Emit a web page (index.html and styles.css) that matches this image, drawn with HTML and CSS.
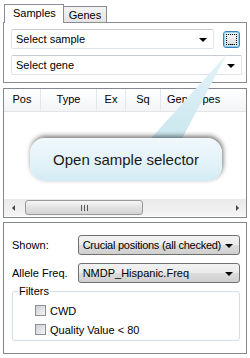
FILE: index.html
```html
<!DOCTYPE html>
<html lang="en">
<head>
<meta charset="UTF-8" />
<title>Samples</title>
<link rel="stylesheet" href="styles.css">
</head>
<body>

<div class="tabs">
  <div class="tab active">Samples</div>
  <div class="tab">Genes</div>
</div>

<div class="tab-panel">
  <div class="row">
    <div class="combo light wide">Select sample<span class="arrow"></span></div>
    <button class="dots"><span class="focus">...</span></button>
  </div>
  <div class="row">
    <div class="combo light full">Select gene<span class="arrow"></span></div>
  </div>
</div>

<div class="grid">
  <div class="grid-head">
    <div class="col c-pos">Pos</div>
    <div class="col c-type">Type</div>
    <div class="col c-ex">Ex</div>
    <div class="col c-sq">Sq</div>
    <div class="col c-gen">Genotypes</div>
  </div>
  <div class="grid-body"></div>
  <div class="hscroll">
    <span class="sarrow left"></span>
    <div class="track">
      <div class="thumb"><span class="grip"></span></div>
    </div>
    <span class="sarrow right"></span>
  </div>
</div>

<div class="options">
  <div class="opt-row">
    <label>Shown:</label>
    <div class="combo button"><span class="text tight">Crucial positions (all checked)</span><span class="arrow"></span></div>
  </div>
  <div class="opt-row">
    <label>Allele Freq.</label>
    <div class="combo button"><span class="text">NMDP_Hispanic.Freq</span><span class="arrow"></span></div>
  </div>
  <div class="filters">
    <span class="legend">Filters</span>
    <div class="check"><span class="box"></span>CWD</div>
    <div class="check"><span class="box"></span>Quality Value &lt; 80</div>
  </div>
</div>

<!-- callout over the grid -->
<svg class="tail" width="250" height="160" viewBox="0 0 250 160">
  <defs>
    <linearGradient id="tailFill" x1="0" y1="0" x2="0" y2="1">
      <stop offset="0" stop-color="#e4f3f8"/>
      <stop offset="1" stop-color="#c9e6ef"/>
    </linearGradient>
  </defs>
  <polygon points="227,54 144,146 178,146" fill="url(#tailFill)"/>
</svg>
<div class="callout">Open sample selector</div>

</body>
</html>
```

FILE: styles.css
```css
body {
  font-family: 'Liberation Sans', Arial, sans-serif;
  font-size: 11px;
  margin: 0;
  padding: 0;
  background: #fff;
  color: #000;
  width: 250px;
  height: 358px;
  position: relative;
  overflow: hidden;
}
.tabs {
  display: flex;
  align-items: flex-end;
  padding: 4px 0 0 4px;
  height: 18px;
  position: relative;
  z-index: 1;
}
.tab {
  border: 1px solid #898c95;
  border-bottom: none;
  padding: 0 5px;
  line-height: 16px;
  background: linear-gradient(#f3f3f3, #e4e4e4);
  box-sizing: border-box;
  height: 16px;
}
.tab.active {
  background: #fff;
  height: 19px;
  padding: 0 7px 0 8px;
  margin-right: -1px;
  line-height: 16px;
  position: relative;
  top: 1px;
}
.tab-panel {
  margin: 0 3px;
  border: 1px solid #898c95;
  height: 53px;
  padding: 6px 0 0 7px;
}
.tab-panel .row {
  display: flex;
  align-items: center;
  height: 20px;
  margin-bottom: 6px;
}
.combo {
  position: relative;
  box-sizing: border-box;
  height: 20px;
  line-height: 18px;
  padding-left: 4px;
  white-space: nowrap;
  overflow: hidden;
}
.combo .text {
  display: block;
  overflow: hidden;
}
.combo .tight { letter-spacing: -0.25px; }
.combo.light {
  border: 1px solid #dfe3ea;
  border-top-color: #c5cad3;
  border-radius: 2px;
  background: #fff;
}
.combo.wide { width: 203px; }
.combo.full { width: 231px; }
.arrow {
  position: absolute;
  right: 6px;
  top: 8px;
  border-left: 4px solid transparent;
  border-right: 4px solid transparent;
  border-top: 4px solid #000;
}
.dots {
  margin-left: 9px;
  width: 17px;
  height: 17px;
  padding: 2px;
  border: 1px solid #3c7fb1;
  border-radius: 3px;
  background: linear-gradient(#eef5fb, #c9dfef);
  box-shadow: 0 0 0 1px #8fd0f5 inset;
  font: 9px 'Liberation Sans', sans-serif;
}
.dots .focus {
  display: block;
  height: 11px;
  border: 1px dotted #000;
  line-height: 14px;
  background: linear-gradient(#f6f6f6, #dcdcdc);
  box-sizing: border-box;
}
.grid {
  margin: 5px 3px 0;
  border: 1px solid #828790;
  height: 128px;
  display: flex;
  flex-direction: column;
}
.grid-head {
  display: flex;
  height: 22px;
  background: linear-gradient(#fff, #f3f4f6);
  border-bottom: 1px solid #e5e5e5;
}
.col {
  border-right: 1px solid #e3e8ee;
  line-height: 21px;
  text-align: center;
  box-sizing: border-box;
}
.c-pos { width: 37px; }
.c-type { width: 56px; }
.c-ex { width: 29px; }
.c-sq { width: 35px; }
.c-gen { width: 70px; padding-left: 6px; text-align: left; border-right: none; }
.grid-body { flex: 1; }
.hscroll {
  display: flex;
  align-items: center;
  height: 17px;
  background: linear-gradient(#e9e9e9, #f5f5f5);
  margin-bottom: 1px;
}
.sarrow {
  width: 18px;
  display: flex;
  justify-content: center;
}
.sarrow.left::before {
  content: "";
  border-top: 3px solid transparent;
  border-bottom: 3px solid transparent;
  border-right: 3px solid #444;
}
.sarrow.right::before {
  content: "";
  border-top: 3px solid transparent;
  border-bottom: 3px solid transparent;
  border-left: 3px solid #444;
}
.track { flex: 1; height: 15px; }
.thumb {
  width: 118px;
  height: 15px;
  margin-left: 3px;
  box-sizing: border-box;
  border: 1px solid #9a9a9a;
  border-radius: 3px;
  background: linear-gradient(#f7f7f7, #e2e2e2 50%, #d6d6d6);
  display: flex;
  align-items: center;
  justify-content: center;
}
.grip {
  width: 7px;
  height: 6px;
  background: repeating-linear-gradient(90deg, #555 0 1px, transparent 1px 3px);
}
.options {
  margin: 4px 3px 0;
  border: 1px solid #828790;
  height: 132px;
  padding: 12px 6px 0 7px;
  box-sizing: border-box;
}
.opt-row {
  display: flex;
  align-items: center;
  height: 20px;
  margin-bottom: 8px;
}
.opt-row label {
  width: 66px;
  padding-left: 1px;
}
.combo.button {
  width: 163px;
  border: 1px solid #707070;
  border-radius: 3px;
  background: linear-gradient(#f2f2f2, #ebebeb 50%, #dddddd 51%, #cfcfcf);
  padding-left: 4px;
  padding-right: 17px;
}
.combo.button .arrow { right: 6px; }
.filters {
  margin: 0 0 0 1px;
  border: 1px solid #d5dfe5;
  border-radius: 3px;
  padding: 12px 0 0 22px;
  height: 50px;
  box-sizing: border-box;
  position: relative;
}
.filters .legend {
  position: absolute;
  top: -7px;
  left: 5px;
  padding: 0 1px;
  line-height: 12px;
  background: #fff;
}
.check {
  display: flex;
  align-items: center;
  height: 13px;
  margin-bottom: 6px;
}
.box {
  width: 11px;
  height: 11px;
  border: 1px solid #8e8f8f;
  box-sizing: border-box;
  background: linear-gradient(135deg, #cbcfd5, #f6f6f6);
  margin-right: 4px;
}
.tail {
  position: absolute;
  left: 0;
  top: 0;
}
.callout {
  position: absolute;
  left: 30px;
  top: 138px;
  width: 192px;
  height: 43px;
  box-sizing: border-box;
  border-radius: 15px;
  background: linear-gradient(#f0f8fb, #e2f2f8 60%, #d3ebf3);
  box-shadow: 1px -2px 5px rgba(0, 0, 0, 0.55);
  font-size: 15px;
  line-height: 43px;
  text-align: center;
  color: #1a1a1a;
}
```
